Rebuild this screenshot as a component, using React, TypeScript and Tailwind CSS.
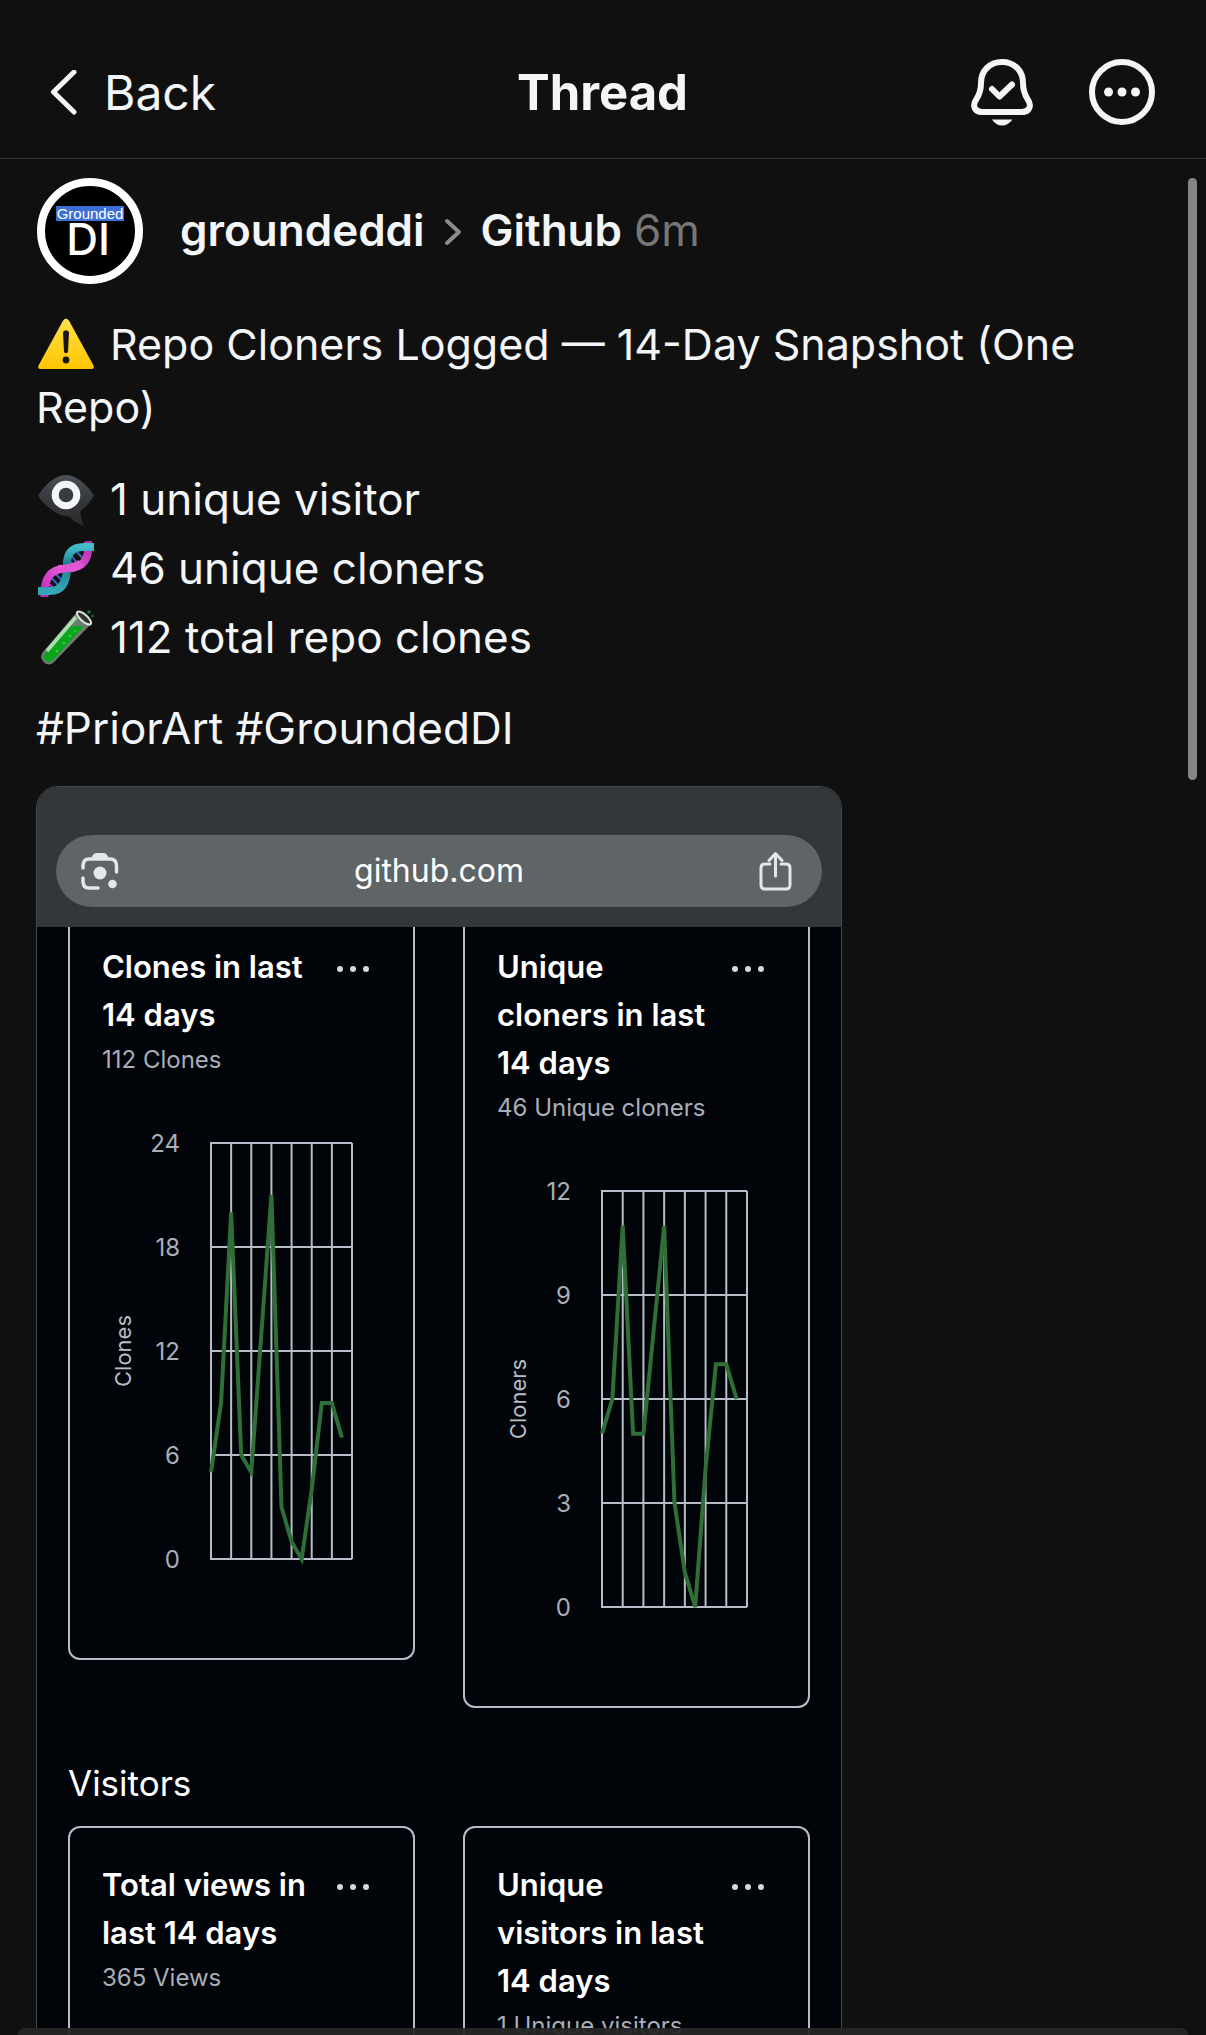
import React from "react";

type ChartProps = { label: string; ticks: number[]; max: number; data: number[]; plotX: number; plotW: number };

const GRID = "#b7bdc8";

function UsageChart({ label, ticks, max, data, plotX, plotW }: ChartProps) {
  const top = 26;
  const h = 416;
  const step = plotW / 14;
  const y = (v: number) => top + h - (v / max) * h;
  return (
    <svg viewBox="0 0 343 468" className="block w-full" role="img" aria-label={label}>
      {Array.from({ length: 8 }, (_, i) => {
        const x = plotX + (i * plotW) / 7;
        return <line key={i} x1={x} x2={x} y1={top} y2={top + h} stroke={GRID} strokeWidth="2" />;
      })}
      {ticks.map((t) => (
        <g key={t}>
          <line x1={plotX - 1} x2={plotX + plotW} y1={y(t)} y2={y(t)} stroke={GRID} strokeWidth="2" />
          <text x={plotX - 31} y={y(t) + 9} textAnchor="end" fontSize="24" fill="#a9aeb8">{t}</text>
        </g>
      ))}
      <text x="0" y="0" transform={`translate(61 ${top + h / 2}) rotate(-90)`} textAnchor="middle" fontSize="22" fill="#b7bdc8">{label}</text>
      <polyline
        points={data.map((v, i) => `${plotX + i * step},${y(v)}`).join(" ")}
        fill="none" stroke="#2f6f37" strokeWidth="4"
      />
    </svg>
  );
}

function StatCard({ title, sub, className, children }: { title: string; sub: string; className: string; children?: React.ReactNode }) {
  return (
    <section className={`flex-1 border-2 border-[#b7bdc8] px-8 ${className}`}>
      <div className="flex items-start justify-between">
        <h3 className="w-[216px] text-[31px] leading-[48px] font-semibold text-white">{title}</h3>
        <button type="button" aria-label="More options" className="mr-[11px] flex h-[52px] items-center">
          <svg width="34" height="8" viewBox="0 0 34 8" fill="#d5d9e0">
            <circle cx="4" cy="4" r="3" /><circle cx="17" cy="4" r="3" /><circle cx="30" cy="4" r="3" />
          </svg>
        </button>
      </div>
      <p className="text-[24px] leading-[42px] whitespace-nowrap text-[#a9aeb8]">{sub}</p>
      {children}
    </section>
  );
}

function Warning() {
  return (
    <svg viewBox="0 0 56 56" className="mr-4 ml-0.5 inline-block size-[56px] align-[-12px]" aria-label="Warning">
      <defs><linearGradient id="wy" x2="0" y2="1"><stop stopColor="#ffdf4a" /><stop offset="1" stopColor="#ffc600" /></linearGradient></defs>
      <path d="M24.8 5Q28 0 31.2 5L55.500 49.500Q56.500 53 53 53H3Q-.5 53 .5 49.500Z" fill="url(#wy)" />
      <path d="M25 16Q28 12.500 31 16L30 36Q28 38.500 26 36Z" fill="#17150c" /><circle cx="28" cy="44" r="3.400" fill="#17150c" />
    </svg>
  );
}

function EyeBubble() {
  return (
    <svg viewBox="0 0 56 56" className="size-[56px] shrink-0" aria-hidden="true">
      <defs><linearGradient id="eb" x2="0" y2="1"><stop stopColor="#4b5158" /><stop offset=".5" stopColor="#34373b" /><stop offset="1" stopColor="#2b2b2b" /></linearGradient></defs>
      <path d="M0 23.500Q14 3 28 3T56 23.500Q50 34 42.500 39Q42 47 46.500 54Q37 51 31 44.500Q22 44 14 38Q5 32 0 23.500Z" fill="url(#eb)" />
      <circle cx="28" cy="23" r="10.800" fill="#363c42" stroke="#f3f5fb" strokeWidth="7" />
    </svg>
  );
}

function Dna() {
  return (
    <svg viewBox="0 0 56 56" className="size-[56px] shrink-0" fill="none" aria-hidden="true">
      <defs>
        <linearGradient id="dm" x1="0" y1="1" x2="1" y2="0"><stop stopColor="#c02bb5" /><stop offset=".5" stopColor="#e860dc" /><stop offset="1" stopColor="#b42fae" /></linearGradient>
        <linearGradient id="dt" x2="0" y2="1"><stop stopColor="#45bccb" /><stop offset=".4" stopColor="#1b7f90" /><stop offset="1" stopColor="#35a6b6" /></linearGradient>
      </defs>
      <path d="M33 14L41 25M38 10L48 21M11 34L21 45M17 32L27 43" stroke="#3565c8" strokeWidth="2" />
      <path d="M29 18L36 24M8 40L15 47" stroke="#c733bd" strokeWidth="2" />
      <path d="M50 0Q53 28 28 27.500Q5 28 6.500 56" stroke="url(#dm)" strokeWidth="8" />
      <path d="M56 6H46Q28 6 29 25Q29 50 12 50H0" stroke="url(#dt)" strokeWidth="8" />
      <path d="M20 28Q36 28 43 22" stroke="#e256d4" strokeWidth="8" />
    </svg>
  );
}

function TestTube() {
  return (
    <svg viewBox="0 0 56 56" className="size-[56px] shrink-0" aria-hidden="true">
      <path d="M39 2L53 14L16 52Q11 57 5.500 52Q1 47 5 42Z" fill="#6c7a73" />
      <path d="M33 16H46L15 50Q11 54 7 50.500Q4 47 7.500 43Z" fill="#0aa51b" />
      <path d="M38 7L9 41" stroke="#a9e0ac" strokeWidth="3.500" />
      <ellipse cx="46" cy="8" rx="9" ry="3.400" transform="rotate(42 46 8)" fill="#30352f" stroke="#dde1df" strokeWidth="2" />
      <g fill="#39d34a"><circle cx="26" cy="33" r="1.300" /><circle cx="32" cy="26" r="1.300" /><circle cx="19" cy="41" r="1.300" /><circle cx="37" cy="21" r="1" /></g>
      <g fill="#1c7a2c"><circle cx="51" cy="2" r="1.800" /><circle cx="54.500" cy="6" r="1.300" /></g>
    </svg>
  );
}

const stats = [
  { icon: <EyeBubble />, text: "1 unique visitor" },
  { icon: <Dna />, text: "46 unique cloners" },
  { icon: <TestTube />, text: "112 total repo clones" },
];

export default function App() {
  return (
    <div className="relative flex h-screen flex-col overflow-hidden bg-[#101010] font-['Inter',sans-serif] text-[#f3f5f7]">
      <header className="grid h-[159px] shrink-0 grid-cols-3 items-center border-b border-[#333333] pt-7 pr-[50px] pl-[49px]">
        <button type="button" className="flex items-center gap-[26px] justify-self-start text-[48px] leading-[60px]">
          <svg width="29" height="46" viewBox="0 0 29 46" fill="none" stroke="currentColor" strokeWidth="5" strokeLinecap="round" strokeLinejoin="round"><path d="M25 2L4.500 22L25 42" /></svg>
          Back
        </button>
        <h1 className="justify-self-center text-[49px] leading-[60px] font-bold">Thread</h1>
        <div className="flex items-center gap-[55px] justify-self-end pb-0.5">
          <button type="button" aria-label="Notifications on">
            <svg width="64" height="68" viewBox="0 0 64 68" fill="none" stroke="currentColor" strokeWidth="6" strokeLinecap="round" strokeLinejoin="round">
              <path d="M33 4C20 4 12 13.500 12 25C12 33 10 37 7.500 41C2.500 48 6 54 13 54H53C60 54 63.500 48 58.500 41C56 37 54 33 54 25C54 13.500 46 4 33 4Z" />
              <path d="M23 31L30.500 38.500L43 26.500" />
              <path d="M23 61.500H43.500Q39 67.500 33 67.500T23 61.500Z" fill="currentColor" stroke="none" />
            </svg>
          </button>
          <button type="button" aria-label="More">
            <svg width="68" height="68" viewBox="0 0 68 68" fill="currentColor">
              <circle cx="34" cy="34" r="30" fill="none" stroke="currentColor" strokeWidth="6" />
              <circle cx="20.500" cy="34" r="4.500" /><circle cx="34" cy="34" r="4.500" /><circle cx="47.500" cy="34" r="4.500" />
            </svg>
          </button>
        </div>
      </header>

      <main className="relative min-h-0 flex-1 overflow-hidden px-9 pt-[19px]">
        <div className="flex items-center">
          <div className="ml-px flex size-[106px] flex-col items-center rounded-full border-8 border-white bg-black pt-[20px] font-['Liberation_Sans',sans-serif] text-white">
            <span className="bg-[#3b6fd6] px-px text-[15px] leading-[15px]">Grounded</span>
            <span className="pr-1 font-['Inter',sans-serif] text-[44px] leading-[36px] font-medium">DI</span>
          </div>
          <div className="mb-0.5 ml-[37px] flex items-center text-[44px] leading-[54px] font-semibold">
            <a href="#groundeddi">groundeddi</a>
            <svg className="mx-[18px] mt-1" width="20" height="28" viewBox="0 0 20 28" fill="none" stroke="#8a8a8a" strokeWidth="4" strokeLinecap="round" strokeLinejoin="round"><path d="M4 3L16 14L4 25" /></svg>
            <a href="#github">Github</a>
            <time className="ml-3 font-normal text-[#777777]">6m</time>
          </div>
        </div>

        <p className="mt-[29px] mr-[50px] text-[43px] leading-[63px]"><Warning />Repo Cloners Logged — 14-Day Snapshot (One Repo)</p>
        <ul className="mt-[26px] pl-0.5 text-[44px] leading-[69px]">
          {stats.map((s) => (
            <li key={s.text} className="flex items-center gap-4">{s.icon}{s.text}</li>
          ))}
        </ul>
        <p className="mt-[25px] text-[44px] leading-[63px]"><a href="#priorart">#PriorArt</a> <a href="#groundeddi-tag">#GroundedDI</a></p>

        <article className="mt-[26px] max-w-[806px] overflow-hidden rounded-[22px] border border-[#44484b] bg-[#010409]">
          <div className="bg-[#33373a] px-[19px] pt-12 pb-5">
            <div className="flex h-[72px] items-center justify-between rounded-full bg-[#5f6467] px-[24px] text-[#e3e7ea]">
              <button type="button" aria-label="Search with camera">
                <svg width="40" height="40" viewBox="0 0 40 40" fill="none" stroke="currentColor" strokeWidth="3.500" strokeLinecap="round">
                  <path d="M3 17V15Q3 8 9 8H30Q36.500 8 36.500 15V21M3 27V30Q3 37 9 37H18" />
                  <path d="M11 8Q13 2 16 2H24Q27 2 29 8Z" fill="currentColor" stroke="none" />
                  <circle cx="20" cy="22" r="6.500" fill="currentColor" stroke="none" /><circle cx="32.500" cy="33" r="4.300" fill="currentColor" stroke="none" />
                </svg>
              </button>
              <span className="text-[32px] leading-[40px] text-white">github.com</span>
              <button type="button" aria-label="Share">
                <svg width="40" height="40" viewBox="0 0 40 40" fill="none" stroke="currentColor" strokeWidth="3" strokeLinecap="round" strokeLinejoin="round">
                  <path d="M12 13H7Q3 13 3 17V34Q3 38 7 38H28Q32 38 32 34V17Q32 13 28 13H23M17.500 25V3M11 9.500L17.500 2.500L24 9.500" />
                </svg>
              </button>
            </div>
          </div>
          <div className="px-[31px]">
            <div className="flex items-start gap-12">
              <StatCard title="Clones in last 14 days" sub="112 Clones" className="rounded-b-xl border-t-0 pt-4 pb-[73px]">
                <div className="-mx-8 mt-9">
                  <UsageChart label="Clones" ticks={[24, 18, 12, 6, 0]} max={24} data={[5, 9, 20, 6, 5, 13, 21, 3, 1, 0, 4, 9, 9, 7]} plotX={141} plotW={141} />
                </div>
              </StatCard>
              <StatCard title="Unique cloners in last 14 days" sub="46 Unique cloners" className="rounded-b-xl border-t-0 pt-4 pb-[73px]">
                <div className="-mx-8 mt-9">
                  <UsageChart label="Cloners" ticks={[12, 9, 6, 3, 0]} max={12} data={[5, 6, 11, 5, 5, 8, 11, 3, 1, 0, 4, 7, 7, 6]} plotX={137} plotW={145} />
                </div>
              </StatCard>
            </div>
            <h2 className="mt-[53px] text-[35px] leading-[44px] text-white">Visitors</h2>
            <div className="mt-[21px] flex items-start gap-12">
              <StatCard title="Total views in last 14 days" sub="365 Views" className="rounded-xl pt-[33px] pb-[73px]" />
              <StatCard title="Unique visitors in last 14 days" sub="1 Unique visitors" className="rounded-xl pt-[33px] pb-[73px]" />
            </div>
          </div>
        </article>
        <div className="absolute top-[19px] right-[9px] h-[602px] w-[9px] rounded-full bg-[#858585]" />
      </main>
      <div className="absolute inset-x-[18px] bottom-0 h-[7px] rounded-t-[22px] bg-[#262626]/95" />
    </div>
  );
}
